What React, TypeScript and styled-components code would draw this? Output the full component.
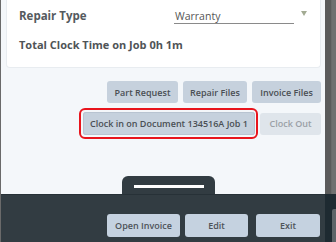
import styled, { createGlobalStyle } from "styled-components";

const GlobalStyle = createGlobalStyle`
  html, body {
    margin: 0;
    padding: 0;
    overflow: hidden;
  }
  body {
    font-family: "Open Sans", "Liberation Sans", sans-serif;
  }
`;

const Frame = styled.div`
  display: flex;
  width: 336px;
  height: 242px;
  overflow: hidden;
`;

const LeftEdge = styled.div`
  width: 1px;
  background: #6a6a6a;
`;

const Main = styled.div`
  width: 324px;
  display: flex;
  flex-direction: column;
  background: #f4f7fa;
`;

const Card = styled.div`
  margin: 0 4px 0 5px;
  height: 68px;
  box-sizing: border-box;
  padding: 0 12px;
  background: #ffffff;
  border: 1px solid #e8ecf0;
  border-top: 0;
  border-radius: 0 0 4px 4px;
`;

const FieldRow = styled.div`
  display: flex;
  align-items: center;
  height: 30px;
`;

const Label = styled.span`
  width: 155px;
  font-size: 11.5px;
  font-weight: 700;
  color: #555a5e;
`;

const Select = styled.div`
  display: flex;
  align-items: center;
  gap: 4px;
`;

const SelectValue = styled.span`
  width: 120px;
  box-sizing: border-box;
  padding-left: 1px;
  font-size: 10.5px;
  line-height: 14px;
  color: #555;
  border-bottom: 1px solid #8a8a8a;
  margin-top: 2px;
`;

const Caret = styled.span`
  width: 0;
  height: 0;
  margin-left: 3px;
  margin-top: -4px;
  border-left: 3.5px solid transparent;
  border-right: 3.5px solid transparent;
  border-top: 5px solid #a3ab93;
`;

const Total = styled.div`
  margin-top: 1px;
  font-size: 11px;
  font-weight: 700;
  color: #4f5457;
  line-height: 28px;
`;

const Actions = styled.div`
  display: flex;
  flex-direction: column;
  align-items: flex-end;
  gap: 5px;
  padding: 13px 4px 0 0;
`;

const ButtonRow = styled.div`
  display: flex;
  align-items: center;
  gap: 5px;
`;

const Button = styled.button<{ $muted?: boolean; $w?: number }>`
  height: 22px;
  width: ${(p) => (p.$w ? `${p.$w}px` : "auto")};
  padding: 0;
  border: 0;
  border-radius: 3px;
  white-space: nowrap;
  font-family: inherit;
  font-size: 9px;
  font-weight: 600;
  color: ${(p) => (p.$muted ? "#9aa0a6" : "#4a4f54")};
  background: ${(p) => (p.$muted ? "#dfe5eb" : "#c6d1dd")};
`;

const Highlight = styled.div`
  padding: 2px 1px 2px 2px;
  margin-right: -3px;
  border: 2px solid #e8141c;
  border-radius: 6px;
  display: flex;
`;

const ClockIn = styled(Button)`
  height: 23px;
  box-shadow: inset 0 0 0 1px #b9c4d1;
`;

const Spacer = styled.div`
  flex: 1;
`;

const Drawer = styled.div`
  display: flex;
  flex-direction: column;
  align-items: center;
`;

const Handle = styled.div`
  width: 93px;
  height: 18px;
  margin-left: 11px;
  background: #323c42;
  border-radius: 6px 6px 0 0;
  display: flex;
  justify-content: center;
  padding-top: 9px;
  box-sizing: border-box;
`;

const HandleLine = styled.div`
  width: 70px;
  height: 3px;
  background: #ffffff;
`;

const Bar = styled.div`
  align-self: stretch;
  height: 48px;
  background: #323c42;
  border-top: 1px solid #273137;
  display: flex;
  justify-content: flex-end;
  align-items: flex-start;
  padding: 19px 5px 0 0;
  box-sizing: border-box;
`;

const BarButtons = styled.div`
  display: flex;
  gap: 5px;
  & > :last-child {
    margin-left: 3px;
  }
`;

const BarButton = styled(Button)`
  height: 23px;
  background: #c5d2e0;
  color: #4e5358;
`;

const Rail = styled.div`
  width: 11px;
  display: flex;
  flex-direction: column;
`;

const RailTop = styled.div`
  flex: 1;
  background: linear-gradient(to right, #5b5b5b 0 6px, #6a6a6a 6px 7px, #707070 7px);
`;

const RailBottom = styled.div`
  height: 48px;
  background: #1e2a31;
  display: flex;
  justify-content: flex-end;
  align-items: flex-start;
`;

const Thumb = styled.div`
  width: 4px;
  height: 34px;
  margin-top: 15px;
  background: #5d6468;
  border-radius: 2px 0 0 0;
`;

export default function App() {
  return (
    <>
      <GlobalStyle />
      <Frame>
        <LeftEdge />
        <Main>
          <Card>
            <FieldRow>
              <Label>Repair Type</Label>
              <Select>
                <SelectValue>Warranty</SelectValue>
                <Caret />
              </Select>
            </FieldRow>
            <Total>Total Clock Time on Job 0h 1m</Total>
          </Card>
          <Actions>
            <ButtonRow>
              <Button $w={71}>Part Request</Button>
              <Button $w={64}>Repair Files</Button>
              <Button $w={69}>Invoice Files</Button>
            </ButtonRow>
            <ButtonRow>
              <Highlight>
                <ClockIn $w={172}>Clock in on Document 134516A Job 1</ClockIn>
              </Highlight>
              <Button $muted $w={61}>Clock Out</Button>
            </ButtonRow>
          </Actions>
          <Spacer />
          <Drawer>
            <Handle>
              <HandleLine />
            </Handle>
            <Bar>
              <BarButtons>
                <BarButton $w={73}>Open Invoice</BarButton>
                <BarButton $w={63}>Edit</BarButton>
                <BarButton $w={64}>Exit</BarButton>
              </BarButtons>
            </Bar>
          </Drawer>
        </Main>
        <Rail>
          <RailTop />
          <RailBottom>
            <Thumb />
          </RailBottom>
        </Rail>
      </Frame>
    </>
  );
}
